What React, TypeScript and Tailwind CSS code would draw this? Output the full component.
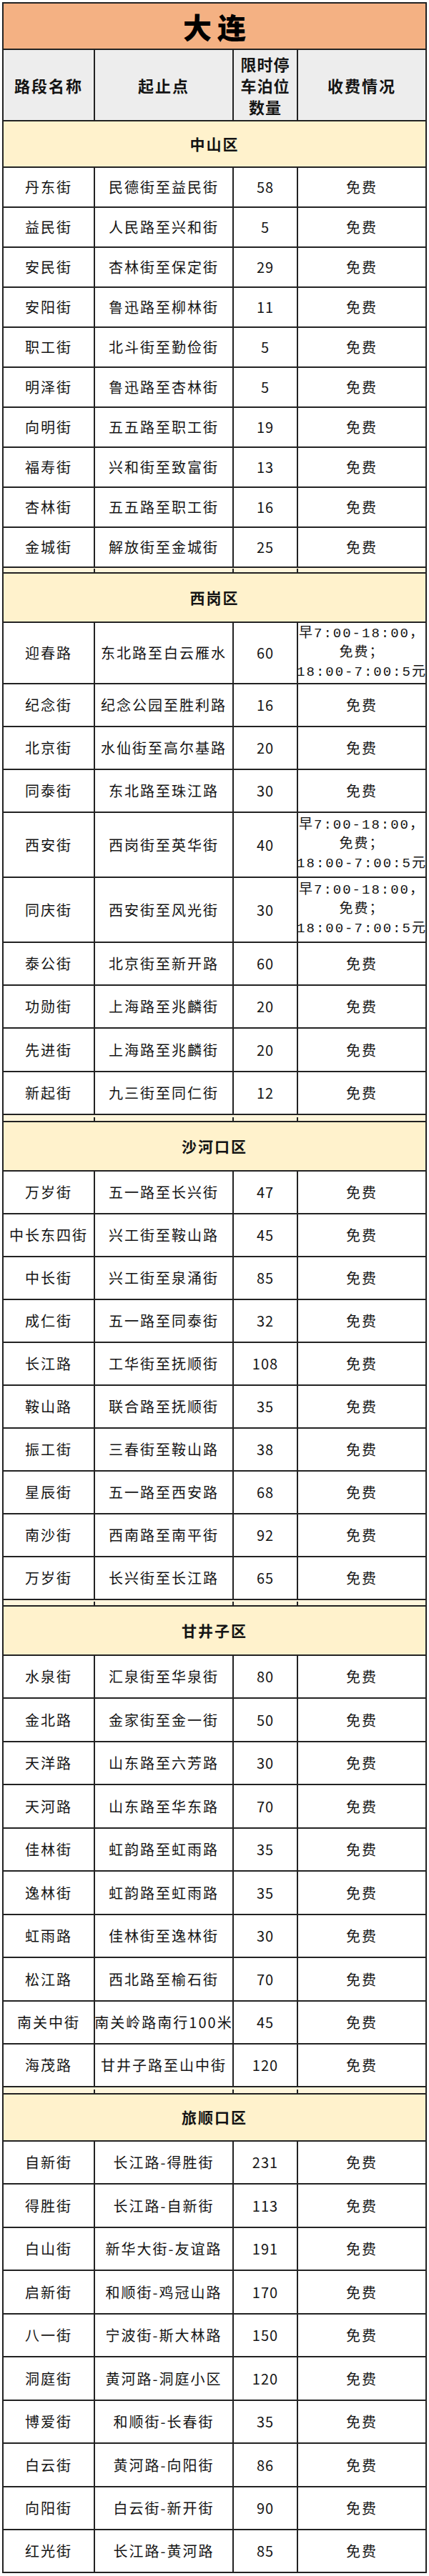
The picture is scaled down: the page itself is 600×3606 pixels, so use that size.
import React from 'react';

type Row = { name: string; range: string; count: string; h: number; night?: boolean };
type Section = { title: string; strip: number; h: number; rows: Row[] };

// full class names for the few row heights used in the sheet
const H: Record<number, string> = {
  8: 'h-[8px]',
  9: 'h-[9px]',
  10: 'h-[10px]',
  56: 'h-[56px]',
  60: 'h-[60px]',
  61: 'h-[61px]',
  65: 'h-[65px]',
  66: 'h-[66px]',
  69: 'h-[69px]',
  86: 'h-[86px]',
  91: 'h-[91px]',
};

const r = (name: string, range: string, count: string, h: number, night = false): Row => ({ name, range, count, h, night });

const sections: Section[] = [
  {
    title: '中山区',
    strip: 0,
    h: 65,
    rows: [
      r('丹东街', '民德街至益民街', '58', 56),
      r('益民街', '人民路至兴和街', '5', 56),
      r('安民街', '杏林街至保定街', '29', 56),
      r('安阳街', '鲁迅路至柳林街', '11', 56),
      r('职工街', '北斗街至勤俭街', '5', 56),
      r('明泽街', '鲁迅路至杏林街', '5', 56),
      r('向明街', '五五路至职工街', '19', 56),
      r('福寿街', '兴和街至致富街', '13', 56),
      r('杏林街', '五五路至职工街', '16', 56),
      r('金城街', '解放街至金城街', '25', 56),
    ],
  },
  {
    title: '西岗区',
    strip: 8,
    h: 69,
    rows: [
      r('迎春路', '东北路至白云雁水', '60', 86, true),
      r('纪念街', '纪念公园至胜利路', '16', 60),
      r('北京街', '水仙街至高尔基路', '20', 60),
      r('同泰街', '东北路至珠江路', '30', 60),
      r('西安街', '西岗街至英华街', '40', 91, true),
      r('同庆街', '西安街至风光街', '30', 91, true),
      r('泰公街', '北京街至新开路', '60', 60),
      r('功勋街', '上海路至兆麟街', '20', 60),
      r('先进街', '上海路至兆麟街', '20', 61),
      r('新起街', '九三街至同仁街', '12', 60),
    ],
  },
  {
    title: '沙河口区',
    strip: 10,
    h: 69,
    rows: [
      r('万岁街', '五一路至长兴街', '47', 60),
      r('中长东四街', '兴工街至鞍山路', '45', 60),
      r('中长街', '兴工街至泉涌街', '85', 60),
      r('成仁街', '五一路至同泰街', '32', 60),
      r('长江路', '工华街至抚顺街', '108', 60),
      r('鞍山路', '联合路至抚顺街', '35', 60),
      r('振工街', '三春街至鞍山路', '38', 60),
      r('星辰街', '五一路至西安路', '68', 60),
      r('南沙街', '西南路至南平街', '92', 60),
      r('万岁街', '长兴街至长江路', '65', 60),
    ],
  },
  {
    title: '甘井子区',
    strip: 9,
    h: 69,
    rows: [
      r('水泉街', '汇泉街至华泉街', '80', 60),
      r('金北路', '金家街至金一街', '50', 61),
      r('天洋路', '山东路至六芳路', '30', 60),
      r('天河路', '山东路至华东路', '70', 61),
      r('佳林街', '虹韵路至虹雨路', '35', 60),
      r('逸林街', '虹韵路至虹雨路', '35', 61),
      r('虹雨路', '佳林街至逸林街', '30', 60),
      r('松江路', '西北路至榆石街', '70', 61),
      r('南关中街', '南关岭路南行100米', '45', 60),
      r('海茂路', '甘井子路至山中街', '120', 60),
    ],
  },
  {
    title: '旅顺口区',
    strip: 10,
    h: 66,
    rows: [
      r('自新街', '长江路-得胜街', '231', 60),
      r('得胜街', '长江路-自新街', '113', 61),
      r('白山街', '新华大街-友谊路', '191', 60),
      r('启新街', '和顺街-鸡冠山路', '170', 61),
      r('八一街', '宁波街-斯大林路', '150', 60),
      r('洞庭街', '黄河路-洞庭小区', '120', 61),
      r('博爱街', '和顺街-长春街', '35', 60),
      r('白云街', '黄河路-向阳街', '86', 61),
      r('向阳街', '白云街-新开街', '90', 60),
      r('红光街', '长江路-黄河路', '85', 60),
    ],
  },
];

const grid = 'grid grid-cols-[128px_194px_90px_178px]';
const cell = 'flex items-center justify-center border-r-2 border-[#222] whitespace-nowrap';

function NightFee() {
  return (
    <div className="flex flex-col items-center whitespace-nowrap font-['Liberation_Mono','Noto_Sans_CJK_SC',monospace] text-[19px] leading-[27px]">
      <span>早7:00-18:00，</span>
      <span>免费；</span>
      <span>18:00-7:00:5元</span>
    </div>
  );
}

function Strip({ h }: { h: number }) {
  // the little gap left between pasted blocks of the sheet
  return (
    <div className={`${grid} ${H[h]} bg-[#fff6dc] border-b-2 border-[#222]`}>
      {[0, 1, 2].map((i) => (
        <div key={i} className="flex justify-end items-end">
          <div className="w-[2px] h-[5px] bg-[#222]" />
        </div>
      ))}
      <div />
    </div>
  );
}

export default function App() {
  return (
    <div className="min-h-[3606px] bg-white pt-[3px] font-['Noto_Sans_CJK_SC',sans-serif] text-[#141414]">
      <div className="ml-[3px] w-[594px] border-2 border-b-0 border-[#222]">
        {/* title */}
        <div className="h-[65px] bg-[#f4b183] border-b-2 border-[#222] flex items-center justify-center pl-[8px] text-[40px] font-black tracking-[8px] text-black">
          大连
        </div>

        {/* column header */}
        <div className={`${grid} h-[100px] bg-[#ededed] border-b-2 border-[#222] text-[22px] font-bold tracking-[2px]`}>
          <div className={cell}>路段名称</div>
          <div className={cell}>起止点</div>
          <div className={`${cell} flex-col leading-[30px] tracking-[1px]`}>
            <span>限时停</span>
            <span>车泊位</span>
            <span>数量</span>
          </div>
          <div className="flex items-center justify-center">收费情况</div>
        </div>

        {sections.map((s) => (
          <React.Fragment key={s.title}>
            {s.strip > 0 && <Strip h={s.strip} />}
            <div className={`${H[s.h]} bg-[#fff2cc] border-b-2 border-[#222] flex items-center justify-center text-[21px] font-bold tracking-[2px]`}>
              {s.title}
            </div>
            {s.rows.map((row, i) => (
              <div key={s.title + i} className={`${grid} ${H[row.h]} border-b-2 border-[#222] text-[20px] leading-none`}>
                <div className={`${cell} tracking-[2px]`}>{row.name}</div>
                <div className={`${cell} tracking-[2px]`}>{row.range}</div>
                <div className={`${cell} tracking-[1px]`}>{row.count}</div>
                <div className="flex items-center justify-center tracking-[2px]">
                  {row.night ? <NightFee /> : '免费'}
                </div>
              </div>
            ))}
          </React.Fragment>
        ))}
      </div>
    </div>
  );
}
